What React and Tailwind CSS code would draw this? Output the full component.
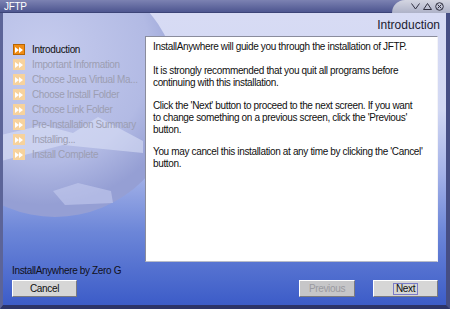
import React from 'react';

const steps = [
  'Introduction',
  'Important Information',
  'Choose Java Virtual Ma...',
  'Choose Install Folder',
  'Choose Link Folder',
  'Pre-Installation Summary',
  'Installing...',
  'Install Complete',
];

function StepIcon({ active }) {
  return (
    <span
      className={`w-[12px] h-[11px] shrink-0 flex items-center justify-center ${
        active ? 'bg-[#f08c14] border border-[#b86400]' : 'bg-[#f7d29c]'
      }`}
    >
      <svg width="8" height="6" viewBox="0 0 8 6">
        <path d="M0 0L4 3L0 6Z M4 0L8 3L4 6Z" fill="#ffffff" />
      </svg>
    </span>
  );
}

function WindowControls() {
  return (
    <div className="absolute right-0 top-0 h-[13px] w-[58px] rounded-tl-[14px] bg-gradient-to-b from-[#d4d6e2] to-[#aeb2c8] flex items-center justify-end gap-[3px] pr-[6px]">
      <svg width="9" height="7" viewBox="0 0 9 7">
        <path d="M0.5 0.5L4.5 6L8.5 0.5" fill="none" stroke="#303040" strokeWidth="1" />
      </svg>
      <svg width="9" height="7" viewBox="0 0 9 7">
        <path d="M0.5 6.5L4.5 0.5L8.5 6.5Z" fill="none" stroke="#303040" strokeWidth="1" />
      </svg>
      <svg width="9" height="9" viewBox="0 0 9 9">
        <circle cx="4.5" cy="4.5" r="3.8" fill="none" stroke="#303040" strokeWidth="1" />
        <path d="M2.6 2.6L6.4 6.4M6.4 2.6L2.6 6.4" stroke="#303040" strokeWidth="1" />
      </svg>
    </div>
  );
}

function Backdrop() {
  // globe artwork behind the step list
  return (
    <svg className="absolute inset-0 pointer-events-none" width="443" height="292" viewBox="0 0 443 292">
      <defs>
        <radialGradient id="globe" cx="0.45" cy="0.35" r="0.6">
          <stop offset="0" stopColor="#c6ccee" />
          <stop offset="0.72" stopColor="#b2bae4" />
          <stop offset="1" stopColor="#959fd4" />
        </radialGradient>
      </defs>
      <circle cx="52" cy="80" r="124" fill="url(#globe)" />
      <path d="M-10 124L40 112L70 120L95 104L140 128L140 140L60 132L-10 150Z" fill="#dfe3f8" opacity="0.55" />
      <path d="M50 178L75 170L108 178L110 190L62 192Z" fill="#c4cbee" opacity="0.6" />
    </svg>
  );
}

function Button({ children, disabled, focused, className = '' }) {
  return (
    <div
      className={`h-[17px] flex items-center justify-center border border-t-white border-l-white border-r-[#7a7a80] border-b-[#7a7a80] ${
        disabled ? 'bg-[#c6c6c8] text-[#9a9aa0]' : 'bg-[#d6d6d6] text-[#101010]'
      } ${className}`}
    >
      <span className={focused ? 'px-[2px] leading-[10px] border border-[#7c7cc8]' : ''}>{children}</span>
    </div>
  );
}

export default function App() {
  return (
    <div className="w-[450px] h-[309px] flex flex-col overflow-hidden bg-[#30386c] text-[10px] tracking-[-0.35px] font-['Liberation_Sans',Arial,sans-serif]">
      {/* title bar */}
      <div className="relative h-[13px] shrink-0 bg-gradient-to-b from-[#7c82b2] to-[#4e5690] border-b border-[#3c4478]">
        <span className="absolute left-[4px] top-[1px] text-[10px] text-white leading-[11px]">JFTP</span>
        <WindowControls />
      </div>

      <div className="relative flex-1 flex flex-col border-l-[3px] border-r-[4px] border-b-[4px] border-l-[#5c6498] border-r-[#464e84] border-b-[#2c3468] bg-[linear-gradient(to_bottom,#d7dbf4_0%,#d2d8f3_33%,#a4b2e8_55%,#6c86d8_75%,#3c5cc8_100%)]">
        <Backdrop />

        <div className="relative h-[23px] shrink-0 flex items-end justify-end pr-[6px] pb-[5px]">
          <span className="text-[12px] tracking-[0px] leading-[12px] text-[#202030]">Introduction</span>
        </div>

        <div className="relative flex h-[226px] shrink-0">
          <ul className="w-[142px] shrink-0 pl-[10px] pt-[6px] flex flex-col">
            {steps.map((s, i) => (
              <li key={s} className="h-[15px] flex items-center gap-[7px]">
                <StepIcon active={i === 0} />
                <span className={`whitespace-nowrap ${i === 0 ? 'text-[#101010]' : 'text-[#9c9eb2]'}`}>{s}</span>
              </li>
            ))}
          </ul>

          <div className="w-[293px] shrink-0 bg-white border border-t-[#8a8c9c] border-l-[#8a8c9c] border-r-[#f4f4f8] border-b-[#b8bcc8] px-[7px] pt-[4px] leading-[12px] text-[#101010]">
            <p className="mb-[12px]">InstallAnywhere will guide you through the installation of JFTP.</p>
            <p className="mb-[11px]">
              It is strongly recommended that you quit all programs before
              <br />
              continuing with this installation.
            </p>
            <p className="mb-[10px]">
              Click the 'Next' button to proceed to the next screen. If you want
              <br />
              to change something on a previous screen, click the 'Previous'
              <br />
              button.
            </p>
            <p>
              You may cancel this installation at any time by clicking the 'Cancel'
              <br />
              button.
            </p>
          </div>
        </div>

        <div className="relative flex-1 flex flex-col pl-[9px] pt-[3px]">
          <span className="leading-[12px] text-[#101018]">InstallAnywhere by Zero G</span>
          <div className="flex mt-[3px]">
            <Button className="w-[65px]">Cancel</Button>
            <Button disabled className="w-[56px] ml-[222px]">Previous</Button>
            <Button focused className="w-[65px] ml-[18px]">Next</Button>
          </div>
        </div>
      </div>
    </div>
  );
}
